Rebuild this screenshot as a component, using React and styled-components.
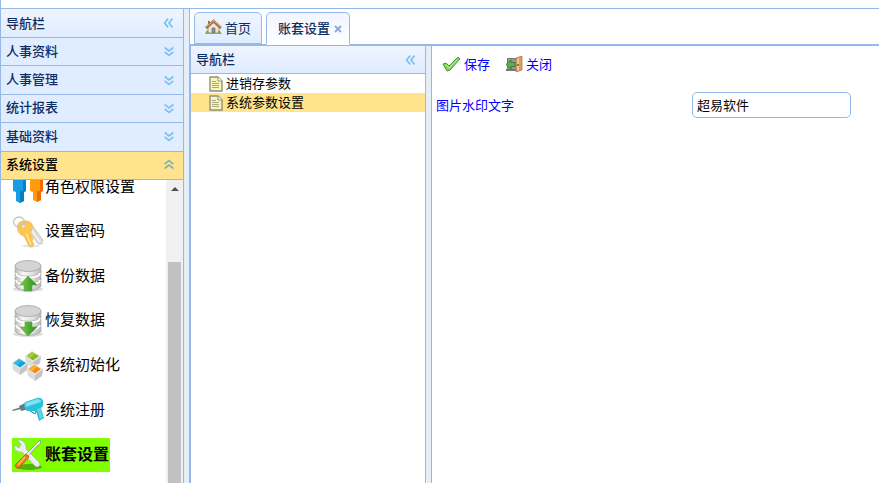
import React, { useState } from 'react';
import styled, { createGlobalStyle } from 'styled-components';

const GlobalStyle = createGlobalStyle`
  * {
    box-sizing: border-box;
  }
  html, body, #root {
    height: 100%;
    margin: 0;
  }
  body {
    overflow: hidden;
    background: #fff;
    color: #000;
  }
  body, button, input {
    font-family: "Noto Sans CJK SC", sans-serif;
    font-size: 13px;
  }
  button {
    padding: 0;
    border: 0;
    background: none;
    cursor: pointer;
  }
`
const Page = styled.div`
  display: flex;
  flex-direction: column;
  height: 100vh;
  padding-top: 8px;
  border-left: 1px solid #95b8e7;
`
const Layout = styled.div`
  display: flex;
  flex: 1;
  min-height: 0;
  border-top: 1px solid #95b8e7;
`
const Sidebar = styled.aside`
  display: flex;
  flex-direction: column;
  flex: 0 0 183px;
  border-right: 1px solid #95b8e7;
`
const Splitter = styled.div`
  flex: 0 0 5px;
  background: #e6eef8;
`
const PanelHeader = styled.div`
  display: flex;
  flex-shrink: 0;
  align-items: center;
  justify-content: space-between;
  height: ${props => props.$height}px;
  padding: 0 7px 2px 5px;
  border-bottom: 1px solid #95b8e7;
  background: linear-gradient(to bottom, #eff5ff, #e0ecff);
  color: #0e2d5f;
  font-weight: 500;

  svg {
    margin-top: 2px;
  }
`
const Accordion = styled.div`
  display: grid;
  flex-shrink: 0;
  grid-template-rows: repeat(5, 1fr);
  height: 142px;
`
const AccordionHeader = styled.button`
  display: flex;
  align-items: center;
  justify-content: space-between;
  padding: 0 7px 3px 5px;
  border-bottom: 1px solid #95b8e7;
  background: ${props => props.$active ? '#ffe48d' : '#e0ecff'};
  color: ${props => props.$active ? '#000' : '#0e2d5f'};
  font-weight: 500;

  svg {
    margin-top: 2px;
  }
`
const SidebarBody = styled.div`
  display: flex;
  flex: 1;
  min-height: 0;
  overflow: hidden;
`
const MenuList = styled.div`
  display: flex;
  flex: 1;
  flex-direction: column;
  align-items: flex-start;
  justify-content: space-between;
  height: 302px;
  margin-top: -10px;
  padding-left: 11px;
`
const MenuItem = styled.button`
  display: flex;
  align-items: center;
  height: 34px;
  padding: 0 1px 4px 0;
  background: ${props => props.$selected ? '#80ff00' : 'transparent'};
  font-size: ${props => props.$selected ? 16 : 15}px;
  font-weight: ${props => props.$selected ? 700 : 400};
  white-space: nowrap;

  svg {
    margin: 4px 1px 0 0;
  }
`
const ScrollTrack = styled.div`
  display: flex;
  flex: 0 0 17px;
  flex-direction: column;
  align-items: center;
  padding-top: 7px;
  background: #f0f0f0;
`
const ScrollArrow = styled.div`
  border: 4px solid transparent;
  border-top-width: 0;
  border-bottom-color: #505050;
`
const ScrollThumb = styled.div`
  flex: 1;
  width: 13px;
  margin-top: 71px;
  background: #c1c1c1;
`
const Center = styled.main`
  display: flex;
  flex: 1;
  flex-direction: column;
  min-width: 0;
  border-left: 1px solid #95b8e7;
`
const Tabs = styled.div`
  display: flex;
  flex-shrink: 0;
  gap: 4px;
  height: 36px;
  padding: 3px 0 0 4px;
  border-bottom: 1px solid #95b8e7;
`
const Tab = styled.div`
  display: flex;
  align-items: center;
  height: ${props => props.$active ? 33 : 32}px;
  padding: ${props => props.$active ? '0 7px 2px 11px' : '0 10px 2px'};
  border: 1px solid #95b8e7;
  border-bottom-color: ${props => props.$active ? '#fff' : '#95b8e7'};
  border-radius: 5px 5px 0 0;
  background: linear-gradient(to bottom, #eff5ff, ${props => props.$active ? '#fff' : '#e0ecff'});
`
const TabLabel = styled.button`
  display: flex;
  align-items: center;
  gap: 3px;
  color: #0e2d5f;
  font-weight: ${props => props.$active ? 500 : 400};
`
const TabClose = styled.button`
  display: flex;
  margin: 3px 0 0 4px;
`
const Workspace = styled.div`
  display: flex;
  flex: 1;
  min-height: 0;
  border: solid #95b8e7;
  border-width: 1px 0 0 1px;
`
const NavPanel = styled.nav`
  flex: 0 0 235px;
  border-right: 1px solid #95b8e7;
`
const TreeNode = styled.button`
  display: flex;
  align-items: center;
  gap: 3px;
  width: 100%;
  height: 19px;
  padding: 0 0 2px 18px;
  background: ${props => props.$selected ? '#ffe48d' : 'transparent'};

  svg {
    margin-top: 2px;
  }
`
const Content = styled.section`
  flex: 1;
  min-width: 0;
  padding: 8px 4px;
  border-left: 1px solid #95b8e7;
`
const Toolbar = styled.div`
  display: flex;
  gap: 16px;
  height: 22px;
  padding: 0 0 4px 6px;
`
const ToolButton = styled.button`
  display: flex;
  align-items: center;
  gap: 3px;
  color: #00f;

  svg {
    margin-top: 2px;
  }
`
const FormRow = styled.div`
  display: grid;
  grid-template-columns: 256px 159px;
  align-items: center;
  margin-top: 16px;
`
const Label = styled.label`
  padding-bottom: 2px;
  color: #00f;
`
const TextInput = styled.input`
  width: 100%;
  height: 26px;
  padding: 0 4px 1px;
  border: 1px solid #95b8e7;
  border-radius: 5px;
  outline: none;
`

const CHEVRONS = {
  left: 'M7 3 L3 8 L7 13 M12 3 L8 8 L12 13',
  down: 'M3 4 L8 8 L13 4 M3 9 L8 13 L13 9',
  up: 'M3 7 L8 3 L13 7 M3 12 L8 8 L13 12'
}

function Chevrons({ direction }) {
  return (
    <svg width="14" height="14" viewBox="0 0 16 16" fill="none" stroke={direction === 'up' ? '#7fb0b4' : '#7dc0f0'} strokeWidth="1.9">
      <path d={CHEVRONS[direction]} />
    </svg>
  )
}

function UsersIcon() {
  return (
    <svg width="32" height="32" viewBox="0 0 32 32">
      <circle cx="8" cy="4" r="4" fill="#199bdc" />
      <path d="M1 9 H14 V20 L12 21 V30 L8 32 L4 30 V21 L1 20Z" fill="#159ee5" />
      <path d="M8 20 V32 L12 30 V21 L14 20 V9 H11 V20Z" fill="#087fc1" />
      <circle cx="25" cy="4" r="4" fill="#ff9b15" />
      <path d="M18 9 H31 V20 L29 21 V29 L25 31 L21 29 V21 L18 20Z" fill="#ff9b0d" />
      <path d="M25 20 V31 L29 29 V21 L31 20 V9 H28 V20Z" fill="#f46c00" />
    </svg>
  )
}

function KeysIcon() {
  return (
    <svg width="32" height="32" viewBox="0 0 32 32">
      <ellipse cx="19" cy="30" rx="9" ry="1.5" fill="#e6e6e6" />
      <path d="M15 12 L20 9 L31 24 L30 28 L26 28Z" fill="#dcdcd6" stroke="#bdbdb6" strokeWidth=".7" />
      <path d="M18 12 L28 26" stroke="#f6f6f0" strokeWidth="1.5" />
      <path fillRule="evenodd" d="M6 8 C9 4 15 4 19 7 C22 11 19 15 18 17 L21 23 L20 25 L22 28 L20 31 L17 30 L12 20 C8 19 4 15 6 8Z M9 10 A2 2 0 1 0 13 10 A2 2 0 1 0 9 10" fill="#fcc64f" stroke="#ebb145" strokeWidth=".7" />
      <path d="M14 17 L19 29" stroke="#ffe69b" strokeWidth="1.5" />
      <ellipse cx="7" cy="6" rx="5.5" ry="5" fill="none" stroke="#c4c4c4" strokeWidth="1.3" />
    </svg>
  )
}

function DatabaseIcon({ down }) {
  return (
    <svg width="32" height="32" viewBox="0 0 32 32">
      <defs>
        <linearGradient id="metal">
          <stop stopColor="#b4b4b4" />
          <stop offset=".3" stopColor="#fafafa" />
          <stop offset=".7" stopColor="#dedede" />
          <stop offset="1" stopColor="#b4b4b4" />
        </linearGradient>
        <linearGradient id="arrow">
          <stop stopColor="#7fc94d" />
          <stop offset="1" stopColor="#27921c" />
        </linearGradient>
      </defs>
      <ellipse cx="16" cy="29" rx="15" ry="3" fill="#ddd" />
      <path d="M3 6 V25 C3 32 29 32 29 25 V6Z" fill="url(#metal)" stroke="#bbb" strokeWidth=".6" />
      <ellipse cx="16" cy="6" rx="13" ry="5.5" fill="#d4d4d4" stroke="#a5a5a5" strokeWidth=".8" />
      <path d="M3 11 C3 18 29 18 29 11 M3 18 C3 25 29 25 29 18 M3 25 C3 32 29 32 29 25" fill="none" stroke="#b0b0b0" />
      <path d="M4 13 C5 19 27 19 28 13 M4 20 C5 26 27 26 28 20" fill="none" stroke="#fff" strokeWidth="1.6" />
      <path d={down ? 'M13 17 H20 V22 H25 L16 31 L8 22 H13Z' : 'M16 16 L25 25 H20 V31 H12 V25 H8Z'} fill="url(#arrow)" stroke="#51a93c" strokeWidth=".6" />
    </svg>
  )
}

function Cube({ x, y, color, shine }) {
  return (
    <g transform={`translate(${x} ${y})`}>
      <path d="M0 5 L7 0 L16 5 L15 12 L8 17 L1 12Z" fill="#dcdcdc" />
      <path d="M8 10 L16 5 L15 12 L8 17Z" fill="#c4c4c4" />
      <path d="M0 5 L7 0 L16 5 L8 11Z" fill="#ececec" />
      <path d="M1.5 5 L7 1 L14 5 L8 9.5Z" fill={color} />
      <path d="M1.5 5 L7 1 L10 3 L5 7.5Z" fill={shine} />
    </g>
  )
}

function CubesIcon() {
  return (
    <svg width="32" height="32" viewBox="0 0 32 32">
      <Cube x={13} y={1} color="#83b91e" shine="#a5cd3b" />
      <Cube x={0} y={8} color="#12a2d6" shine="#35b7e6" />
      <Cube x={15} y={14} color="#f28b11" shine="#ffae32" />
    </svg>
  )
}

function DrillIcon() {
  return (
    <svg width="32" height="32" viewBox="0 0 32 32">
      <path d="M0 16 L9 13 L9 15 L1 17Z" fill="#777" />
      <path d="M7 12 L15 8 L17 15 L9 17Z" fill="#637d86" />
      <path d="M13 8 L25 4 C30 3 32 6 31 12 L29 14 L32 24 L27 27 L24 17 L15 17 C13 15 11 12 13 8Z" fill="#29c0dc" />
      <path d="M13 9 L25 5 C28 5 29 6 29 8 L14 13Z" fill="#7fe0ee" />
      <path d="M25 15 L29 14 L31 23 L28 25Z" fill="#59d4e8" />
      <path d="M18 17 L23 20 L24 17" fill="none" stroke="#1485a8" />
    </svg>
  )
}

function ToolsIcon() {
  return (
    <svg width="32" height="32" viewBox="0 0 32 32">
      <ellipse cx="17" cy="28" rx="13" ry="3" fill="#368811" opacity=".65" />
      <path d="M5 1 L9 5 L7 9 L3 6 C1 10 5 14 10 13 L22 26 C25 30 30 27 27 23 L14 10 C15 5 11 0 5 1Z" fill="#eceeed" stroke="#aaa" strokeWidth=".7" />
      <path d="M28 1 L29 4 L25 7 L16 17 L14 15 L24 5Z" fill="#eee" stroke="#888" strokeWidth=".7" />
      <path d="M14 15 L17 18 L7 29 C4 30 2 27 4 25Z" fill="#f27a18" stroke="#b64b08" strokeWidth=".7" />
      <path d="M13 18 L6 26" stroke="#ffc478" strokeWidth="1.3" />
    </svg>
  )
}

function HouseIcon() {
  return (
    <svg width="17" height="16" viewBox="0 0 17 16">
      <path d="M3 7 L8 2 L14 7 V14 H3Z" fill="#efe3c8" stroke="#a4957c" strokeWidth=".8" />
      <path d="M3 2 H5 V6 H3Z" fill="#8f7358" />
      <path d="M1 9 L8.500 2 L16 9" fill="none" stroke="#8b6547" strokeWidth="2.600" />
      <path d="M1 8 L8.500 1.500 L16 8" fill="none" stroke="#d8a574" strokeWidth="1.200" />
      <path d="M7 9 H10 V14 H7Z" fill="#8993a0" stroke="#5c6269" strokeWidth=".6" />
      <path d="M0 15 L2 11 L5 15 M12 15 L14 11 L17 15Z" fill="#6cae4a" />
      <path d="M1 14.500 H16" stroke="#86b15c" />
    </svg>
  )
}

function DocumentIcon() {
  return (
    <svg width="14" height="16" viewBox="0 0 14 16">
      <path d="M1 1 H9 L13 5 V15 H1Z" fill="#f8f8b4" stroke="#8f8f80" strokeWidth="1.400" />
      <path d="M9 1 V5 H13" fill="#fff" stroke="#8f8f80" />
      <path d="M3 5.500 H7 M3 7.500 H10 M3 9.500 H10 M3 11.500 H10" stroke="#a9a97c" />
    </svg>
  )
}

function CheckIcon() {
  return (
    <svg width="19" height="16" viewBox="0 0 19 16">
      <path d="M1 8 L4 7 L7 10 L16 1 L18 3 L8 14 L5 15Z" fill="#83d45c" stroke="#4a9a3b" />
      <path d="M4 9 L7 12 L15 4" fill="none" stroke="#b9ef9b" />
    </svg>
  )
}

function ExitIcon() {
  return (
    <svg width="17" height="16" viewBox="0 0 17 16">
      <path d="M1 2 H11 V14 H1Z" fill="#777" />
      <path d="M2 3 H10 V13 H2Z" fill="#999" />
      <path d="M0 14 H12" stroke="#777" strokeWidth="2" />
      <path d="M10 2 L16 0 V14 L10 16Z" fill="#d6a066" stroke="#a77542" strokeWidth=".7" />
      <path d="M11 3 L13 2 V14 L11 15Z" fill="#edc994" />
      <circle cx="12" cy="9" r="1" fill="#7d542d" />
      <path d="M0 8.500 L5 4 V6.500 H9 V10.500 H5 V13Z" fill="#63ad57" stroke="#28722a" strokeWidth=".8" />
    </svg>
  )
}

const sections = ['人事资料', '人事管理', '统计报表', '基础资料', '系统设置']

const menu = [
  { name: '角色权限设置', icon: <UsersIcon /> },
  { name: '设置密码', icon: <KeysIcon /> },
  { name: '备份数据', icon: <DatabaseIcon /> },
  { name: '恢复数据', icon: <DatabaseIcon down /> },
  { name: '系统初始化', icon: <CubesIcon /> },
  { name: '系统注册', icon: <DrillIcon /> },
  { name: '账套设置', icon: <ToolsIcon /> }
]

function App() {
  const [section, setSection] = useState('系统设置')
  const [selected, setSelected] = useState('账套设置')
  const [node, setNode] = useState('系统参数设置')

  return (
    <Page>
      <GlobalStyle />
      <Layout>
        <Sidebar>
          <PanelHeader $height={29}>
            导航栏
            <Chevrons direction="left" />
          </PanelHeader>
          <Accordion>
            {sections.map(name => (
              <AccordionHeader key={name} $active={name === section} onClick={() => setSection(name)}>
                {name}
                <Chevrons direction={name === section ? 'up' : 'down'} />
              </AccordionHeader>
            ))}
          </Accordion>
          <SidebarBody>
            <MenuList>
              {menu.map(item => (
                <MenuItem key={item.name} $selected={item.name === selected} onClick={() => setSelected(item.name)}>
                  {item.icon}
                  {item.name}
                </MenuItem>
              ))}
            </MenuList>
            <ScrollTrack>
              <ScrollArrow />
              <ScrollThumb />
            </ScrollTrack>
          </SidebarBody>
        </Sidebar>
        <Splitter />
        <Center>
          <Tabs>
            <Tab>
              <TabLabel><HouseIcon />首页</TabLabel>
            </Tab>
            <Tab $active>
              <TabLabel $active>账套设置</TabLabel>
              <TabClose aria-label="关闭标签">
                <svg width="8" height="8" viewBox="0 0 8 8" stroke="#8ca9cf" strokeWidth="1.8">
                  <path d="M1 1 L7 7 M7 1 L1 7" />
                </svg>
              </TabClose>
            </Tab>
          </Tabs>
          <Workspace>
            <NavPanel>
              <PanelHeader $height={28}>
                导航栏
                <Chevrons direction="left" />
              </PanelHeader>
              {['进销存参数', '系统参数设置'].map(name => (
                <TreeNode key={name} $selected={name === node} onClick={() => setNode(name)}>
                  <DocumentIcon />
                  {name}
                </TreeNode>
              ))}
            </NavPanel>
            <Splitter />
            <Content>
              <Toolbar>
                <ToolButton><CheckIcon />保存</ToolButton>
                <ToolButton><ExitIcon />关闭</ToolButton>
              </Toolbar>
              <FormRow>
                <Label htmlFor="watermark">图片水印文字</Label>
                <TextInput id="watermark" type="text" defaultValue="超易软件" />
              </FormRow>
            </Content>
          </Workspace>
        </Center>
      </Layout>
    </Page>
  )
}

export default App;
